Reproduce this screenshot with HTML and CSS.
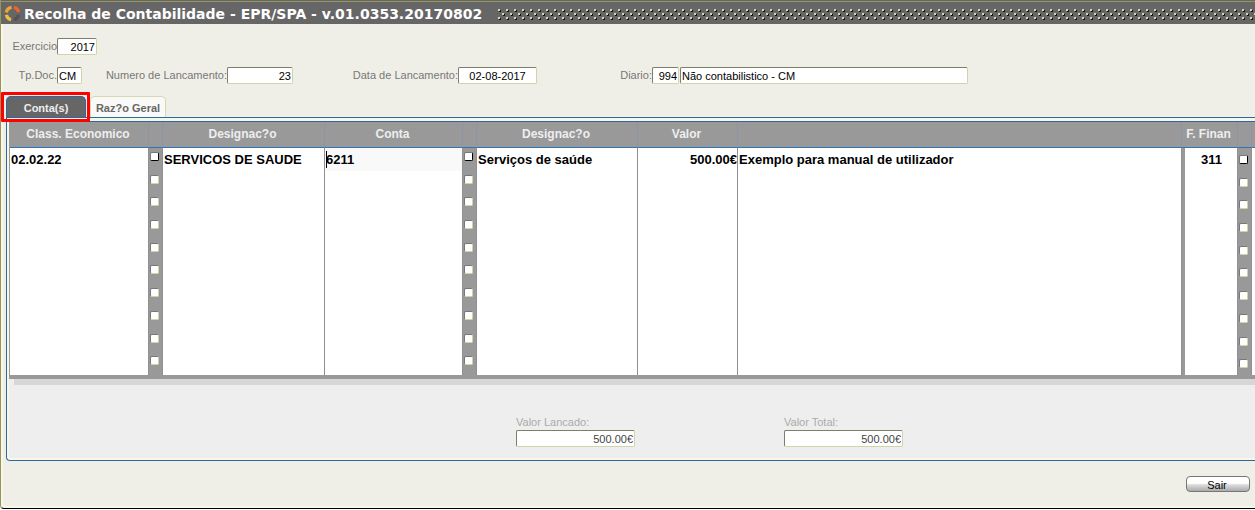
FILE: index.html
```
<!DOCTYPE html>
<html lang="pt">
<head>
<meta charset="utf-8">
<title>Recolha de Contabilidade</title>
<link rel="stylesheet" href="styles.css">
</head>
<body>
<main class="window">
  <header class="titlebar">
    <svg class="logo" viewBox="0 0 18 18" aria-hidden="true">
      <g fill="none" stroke-width="3.5">
        <path stroke="#f0a238" d="M2.5 8A6.5 6.5 0 0 1 8 2.5"/>
        <path stroke="#e9652f" d="M10.500 2.500A6.500 6.500 0 0 1 15.500 7.500"/>
        <path stroke="#f0bd3c" d="M2.500 10.500A6.500 6.500 0 0 0 7.500 15.500"/>
        <path stroke="#59505a" d="M10.500 15.500A6.500 6.500 0 0 0 15.500 10.500"/>
      </g>
    </svg>
    <h1 class="title">Recolha de Contabilidade - EPR/SPA - v.01.0353.20170802</h1>
    <div class="grip"></div>
  </header>

  <form class="form">
    <div class="fields fields-year">
      <label for="ano">Exercicio</label>
      <input class="field right year" id="ano" value="2017">
    </div>
    <div class="fields fields-doc">
      <label for="tipo">Tp.Doc.</label>
      <input class="field" id="tipo" value="CM">
      <label for="numero">Numero de Lancamento:</label>
      <input class="field right" id="numero" value="23">
      <label for="data">Data de Lancamento:</label>
      <input class="field center" id="data" value="02-08-2017">
      <label for="diario">Diario:</label>
      <input class="field right" id="diario" value="994">
      <input class="field journal" aria-label="Nome do diario" value="Não contabilistico - CM">
    </div>

    <nav class="tabs">
      <button type="button" class="tab active">Conta(s)</button>
      <button type="button" class="tab">Raz?o Geral</button>
    </nav>

    <section class="panel">
      <div class="panel-body">
        <table class="grid">
          <colgroup>
            <col class="c-class"><col class="c-check"><col class="c-name"><col class="c-account"><col class="c-check"><col class="c-name2"><col class="c-value"><col><col class="c-fin"><col class="c-check"><col class="c-end">
          </colgroup>
          <thead>
            <tr><th>Class. Economico</th><th></th><th>Designac?o</th><th>Conta</th><th></th><th>Designac?o</th><th>Valor</th><th></th><th>F. Finan</th><th></th><th></th></tr>
          </thead>
          <tbody>
            <tr>
              <td>02.02.22</td><td class="check"><input class="current" type="checkbox" aria-label="Classe 1"></td><td>SERVICOS DE SAUDE</td><td class="editing"><span class="entry">6211</span></td><td class="check"><input class="current" type="checkbox" aria-label="Conta 1"></td><td>Serviços de saúde</td><td class="right">500.00€</td><td>Exemplo para manual de utilizador</td><td class="fin">311</td><td class="check low"><input class="current" type="checkbox" aria-label="Fonte 1"></td><td></td>
            </tr>
            <tr><td></td><td class="check"><input type="checkbox" aria-label="Classe 2"></td><td></td><td></td><td class="check"><input type="checkbox" aria-label="Conta 2"></td><td></td><td></td><td></td><td class="fin"></td><td class="check low"><input type="checkbox" aria-label="Fonte 2"></td><td></td></tr>
            <tr><td></td><td class="check"><input type="checkbox" aria-label="Classe 3"></td><td></td><td></td><td class="check"><input type="checkbox" aria-label="Conta 3"></td><td></td><td></td><td></td><td class="fin"></td><td class="check low"><input type="checkbox" aria-label="Fonte 3"></td><td></td></tr>
            <tr><td></td><td class="check"><input type="checkbox" aria-label="Classe 4"></td><td></td><td></td><td class="check"><input type="checkbox" aria-label="Conta 4"></td><td></td><td></td><td></td><td class="fin"></td><td class="check low"><input type="checkbox" aria-label="Fonte 4"></td><td></td></tr>
            <tr><td></td><td class="check"><input type="checkbox" aria-label="Classe 5"></td><td></td><td></td><td class="check"><input type="checkbox" aria-label="Conta 5"></td><td></td><td></td><td></td><td class="fin"></td><td class="check low"><input type="checkbox" aria-label="Fonte 5"></td><td></td></tr>
            <tr><td></td><td class="check"><input type="checkbox" aria-label="Classe 6"></td><td></td><td></td><td class="check"><input type="checkbox" aria-label="Conta 6"></td><td></td><td></td><td></td><td class="fin"></td><td class="check low"><input type="checkbox" aria-label="Fonte 6"></td><td></td></tr>
            <tr><td></td><td class="check"><input type="checkbox" aria-label="Classe 7"></td><td></td><td></td><td class="check"><input type="checkbox" aria-label="Conta 7"></td><td></td><td></td><td></td><td class="fin"></td><td class="check low"><input type="checkbox" aria-label="Fonte 7"></td><td></td></tr>
            <tr><td></td><td class="check"><input type="checkbox" aria-label="Classe 8"></td><td></td><td></td><td class="check"><input type="checkbox" aria-label="Conta 8"></td><td></td><td></td><td></td><td class="fin"></td><td class="check low"><input type="checkbox" aria-label="Fonte 8"></td><td></td></tr>
            <tr><td></td><td class="check"><input type="checkbox" aria-label="Classe 9"></td><td></td><td></td><td class="check"><input type="checkbox" aria-label="Conta 9"></td><td></td><td></td><td></td><td class="fin"></td><td class="check low"><input type="checkbox" aria-label="Fonte 9"></td><td></td></tr>
            <tr><td></td><td class="check"><input type="checkbox" aria-label="Classe 10"></td><td></td><td></td><td class="check"><input type="checkbox" aria-label="Conta 10"></td><td></td><td></td><td></td><td class="fin"></td><td class="check low"><input type="checkbox" aria-label="Fonte 10"></td><td></td></tr>
          </tbody>
        </table>
        <div class="shadow"></div>
        <div class="totals">
          <div class="total">
            <label for="lancado">Valor Lancado:</label>
            <input class="field right" id="lancado" value="500.00€">
          </div>
          <div class="total">
            <label for="total">Valor Total:</label>
            <input class="field right" id="total" value="500.00€">
          </div>
        </div>
      </div>
    </section>

    <footer class="actions">
      <button type="button" class="exit">Sair</button>
    </footer>
  </form>
</main>
</body>
</html>
```

FILE: styles.css
```
* {
  box-sizing: border-box;
}

body {
  margin: 0;
  background: #fff;
  font: 11px/13px "Liberation Sans", Arial, sans-serif;
  color: #777;
  overflow: hidden;
}

.window {
  background: #f0efe7;
  border-left: 1px solid #99935c;
  border-bottom: 1px solid #000;
  border-bottom-left-radius: 4px;
  box-shadow: inset 2px -2px #f7f7e8;
  padding-bottom: 16px;
}

.titlebar {
  display: flex;
  align-items: center;
  height: 24px;
  padding-left: 3px;
  background: linear-gradient(#666 1px, #95965f 1px, #95965f 2px, #666 2px);
}

.logo {
  width: 17px;
  height: 17px;
  margin-top: 2px;
}

.title {
  margin: 4px 16px 0 3px;
  font: bold 14px/18px "DejaVu Sans", Verdana, sans-serif;
  color: #fff;
  white-space: nowrap;
}

.grip {
  flex: 1;
  height: 11px;
  margin-top: 4px;
  background:
    conic-gradient(from 270deg at 2px 2px, #d5d7ac 90deg, transparent 0) 0 0 / 8px 8px,
    conic-gradient(from 270deg at 2px 2px, #d5d7ac 90deg, transparent 0) 4px 4px / 8px 8px,
    conic-gradient(from 270deg at 2px 2px, #111 90deg, transparent 0) 1px 1px / 8px 8px,
    conic-gradient(from 270deg at 2px 2px, #111 90deg, transparent 0) 5px 5px / 8px 8px;
}

.fields {
  display: grid;
  align-items: center;
  justify-content: start;
}

.fields label {
  text-align: right;
  white-space: nowrap;
}

.fields-year {
  grid-template-columns: 56px 40px;
  padding-top: 14px;
}

.fields-doc {
  grid-template-columns: 56px 25px 145px 66px 165px 79px 115px 27px 289px;
  padding-top: 12px;
}

.field {
  min-width: 0;
  width: 100%;
  height: 17px;
  padding: 1px 1px 0;
  border: 1px solid #d0d5a9;
  border-top-color: #7d7f6b;
  border-left-color: #7d7f6b;
  border-radius: 2px;
  outline: 0;
  background: #fff;
  color: #000;
  font: inherit;
}

.journal {
  width: auto;
  margin-left: 1px;
}

.center {
  text-align: center;
}

.right {
  text-align: right;
}

.tabs {
  display: flex;
  gap: 4px;
  margin-top: 12px;
  padding-left: 5px;
}

.tab {
  position: relative;
  width: 76px;
  height: 21px;
  padding: 2px 0 0;
  border: 1px solid #d5d8b0;
  border-bottom: 0;
  border-radius: 5px 5px 0 0;
  background: #f9f9f8;
  color: #666;
  font: bold 11px/13px "Liberation Sans", Arial, sans-serif;
}

.tab.active {
  width: 80px;
  border-color: #2d68a0;
  background: #666;
  color: #eee;
}

.tab.active::after {
  content: "";
  position: absolute;
  z-index: 1;
  inset: -5px -5px -5px -6px;
  border: 3px solid #f00;
  border-radius: 1px;
}

.panel {
  margin-left: 5px;
  border: 1px solid #2d68a0;
  border-right: 0;
  border-bottom-left-radius: 4px;
  background: #f7f7e8;
  padding: 3px 0 2px 2px;
}

.panel-body {
  background: #eee;
  padding-bottom: 11px;
}

.grid {
  width: 100%;
  height: 258px;
  table-layout: fixed;
  border-collapse: separate;
  border-spacing: 0;
  border-top: 1px solid #2d68a0;
  border-bottom: 4px solid #999;
  border-left: 1px solid #999;
}

.c-class { width: 139px; }
.c-check { width: 14px; }
.c-name { width: 162px; }
.c-account { width: 138px; }
.c-name2 { width: 161px; }
.c-value { width: 100px; }
.c-fin { width: 56px; }
.c-end { width: 3px; }

.grid th {
  height: 26px;
  padding: 0 2px 2px 0;
  border-right: 1px solid #8b95a3;
  border-bottom: 1px solid #2d75b8;
  background: #999;
  color: #eee;
  font: bold 12px/14px "Liberation Sans", Arial, sans-serif;
  text-align: center;
}

.grid tbody tr {
  height: 22px;
}

.grid td {
  padding: 4px 0 0 1px;
  border-right: 1px solid #8f9094;
  background: #fff;
  color: #000;
  font: bold 13px/15px "Liberation Sans", Arial, sans-serif;
  vertical-align: top;
  white-space: nowrap;
}

.grid .check {
  padding: 4px 0 0 1px;
  background: #999;
  line-height: 0;
}

.grid .low {
  padding: 7px 0 0 1px;
}

.grid .fin {
  border-left: 3px solid #999;
  text-align: center;
}

.grid td:last-child,
.grid th:last-child {
  border-right: 0;
}

.grid .editing {
  background: #f9f9f9;
}

.entry {
  position: relative;
}

.entry::before {
  content: "";
  position: absolute;
  top: -1px;
  left: 0;
  width: 1px;
  height: 17px;
  background: #000;
}

.check input {
  appearance: none;
  width: 9px;
  height: 9px;
  margin: 0;
  border: 1px solid #d0d5a9;
  border-top-color: #777;
  border-left-color: #777;
  border-radius: 2px;
  background: #fff;
}

.check .current {
  border-right-color: #000;
  border-bottom-color: #000;
}

.shadow {
  height: 6px;
  margin-left: 5px;
  background: #d7d7d7;
}

.totals {
  display: flex;
  gap: 149px;
  margin-top: 31px;
  padding-left: 507px;
  color: #aaa;
}

.total {
  display: grid;
  width: 119px;
  gap: 1px;
}

.total .field {
  color: #444;
}

.actions {
  display: flex;
  justify-content: flex-end;
  padding: 15px 5px 0 0;
}

.exit {
  width: 64px;
  height: 16px;
  padding: 2px 2px 0 0;
  border: 1px solid #777;
  border-radius: 4px;
  background: linear-gradient(#fff 45%, #ddd 55%, #aaa);
  color: #000;
  font: 11px/13px "Liberation Sans", Arial, sans-serif;
}
```
